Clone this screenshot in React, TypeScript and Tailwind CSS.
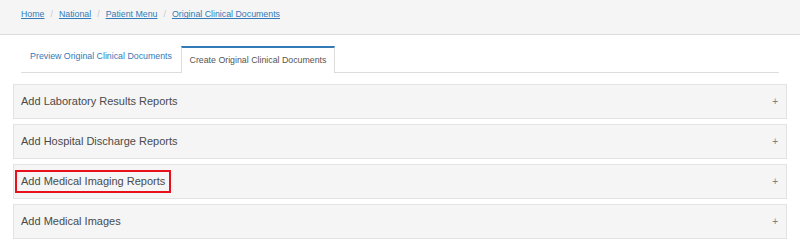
import React from 'react';

const crumbs = ['Home', 'National', 'Patient Menu', 'Original Clinical Documents'];

const panels = [
  { title: 'Add Laboratory Results Reports' },
  { title: 'Add Hospital Discharge Reports' },
  { title: 'Add Medical Imaging Reports', marked: true },
  { title: 'Add Medical Images' },
];

export default function App() {
  return (
    <div className="w-[800px] h-[249px] bg-white overflow-hidden" style={{ fontFamily: '"Liberation Sans", Arial, sans-serif' }}>
      {/* breadcrumb bar */}
      <div className="h-[35px] bg-[#f5f5f5] border-b border-[#dddddd] flex items-center pl-[21px] text-[8.8px] pb-[4px]">
        {crumbs.map((c, i) => (
          <React.Fragment key={c}>
            {i > 0 && <span className="text-[#c8c8c8] px-[6px]">/</span>}
            <a href="#" className="text-[#337ab7] underline">{c}</a>
          </React.Fragment>
        ))}
      </div>

      {/* tabs */}
      <div className="px-[21px] pt-[11px]">
        <div className="flex border-b border-[#dddddd] h-[27px] text-[8.8px]">
          <div className="w-[160px] flex items-center justify-center pb-[4px] text-[#337ab7]">
            Preview Original Clinical Documents
          </div>
          <div className="w-[154px] bg-white border-x border-[#dddddd] border-t-2 border-t-[#337ab7] -mb-px flex items-center justify-center pt-[1px] text-[#555555]">
            Create Original Clinical Documents
          </div>
        </div>
      </div>

      {/* panels */}
      <div className="px-[13px] pt-[11px] flex flex-col gap-[5px]">
        {panels.map(p => (
          <div key={p.title} className="h-[35px] bg-[#f5f5f5] border border-[#e3e3e3] flex items-center justify-between pl-[7px] pr-[8px] text-[11px] text-[#4a4a4a]">
            {p.marked ? (
              <span className="border-2 border-[#e8101a] -ml-[6px] px-[4px] h-[23px] flex items-center">
                {p.title}
              </span>
            ) : (
              <span>{p.title}</span>
            )}
            <span className="text-[10px] text-[#7a8088]">+</span>
          </div>
        ))}
      </div>
    </div>
  );
}
